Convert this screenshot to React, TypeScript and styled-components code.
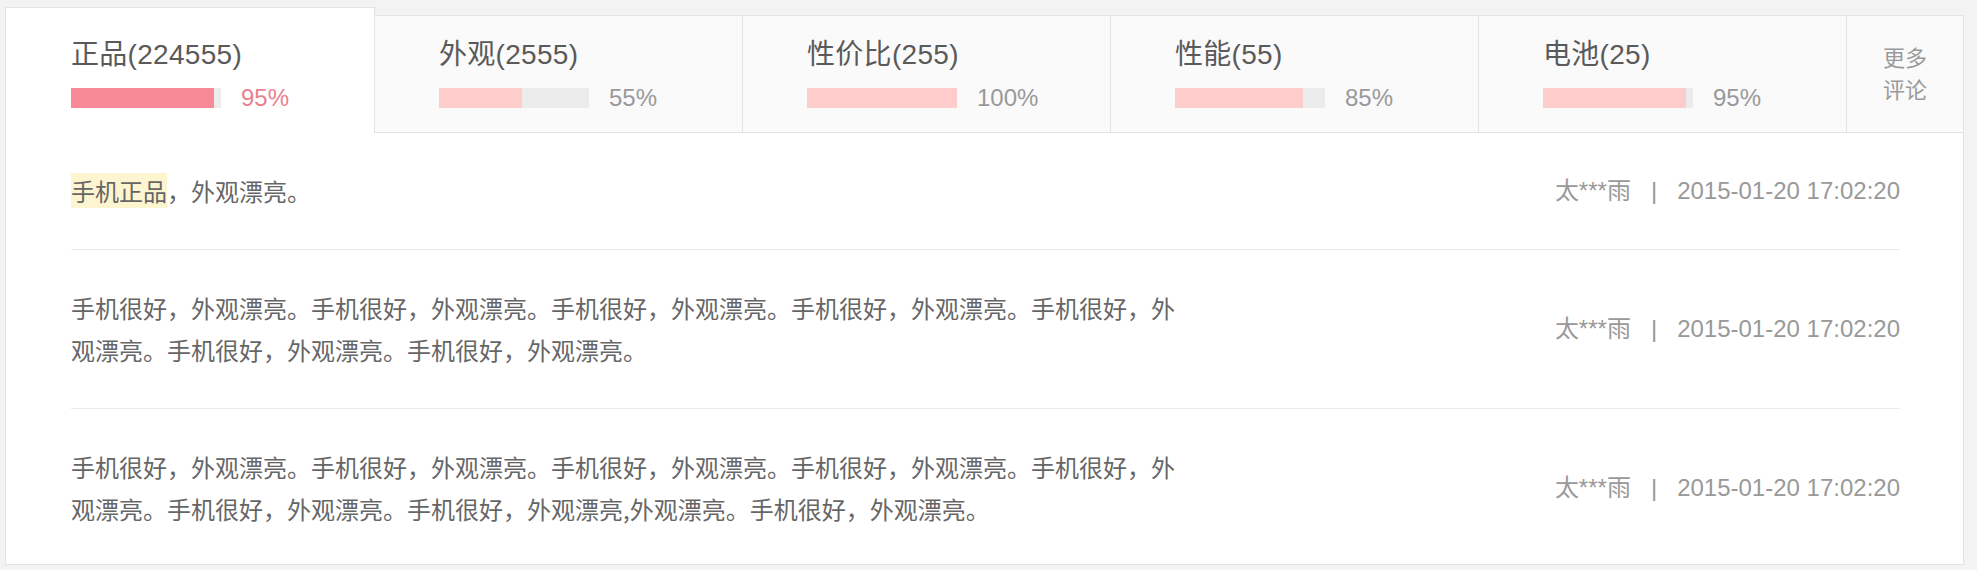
import React from "react";
import styled, { createGlobalStyle } from "styled-components";

const GlobalStyle = createGlobalStyle`
  html, body {
    margin: 0;
    padding: 0;
    background: #f3f3f3;
  }
  body {
    font-family: "Liberation Sans", "Noto Sans CJK SC", sans-serif;
  }
  * { box-sizing: border-box; }
`;

const Page = styled.div`
  padding: 15px 13px 6px 5px;
`;

const Panel = styled.div`
  background: #fff;
  border: 1px solid #e3e3e3;
`;

const TabBar = styled.div`
  display: flex;
  height: 117px;
  background: #fafafa;
  border-bottom: 1px solid #e3e3e3;
`;

const Tab = styled.div<{ $active?: boolean }>`
  position: relative;
  display: flex;
  flex-direction: column;
  flex: none;
  width: ${(p) => (p.$active ? "370px" : "368px")};
  padding-left: ${(p) => (p.$active ? "65px" : "64px")};
  padding-top: ${(p) => (p.$active ? "30px" : "22px")};
  border-right: 1px solid #e3e3e3;
  ${(p) =>
    p.$active
      ? `
    z-index: 1;
    margin: -9px 0 -1px -1px;
    background: #fff;
    border-left: 1px solid #e3e3e3;
    border-top: 1px solid #e3e3e3;
  `
      : ""}
`;

const TabTitle = styled.div`
  font-size: 28px;
  line-height: 34px;
  letter-spacing: 0.3px;
  color: #5a5a5a;
  white-space: nowrap;
`;

const ScoreRow = styled.div`
  display: flex;
  align-items: center;
  margin-top: 12px;
`;

const Track = styled.div`
  width: 150px;
  height: 20px;
  background: #ececec;
`;

const Fill = styled.div<{ $active?: boolean }>`
  height: 100%;
  background: ${(p) => (p.$active ? "#f78a96" : "#ffcccc")};
`;

const Percent = styled.span<{ $active?: boolean }>`
  margin-left: 20px;
  font-size: 24px;
  line-height: 28px;
  color: ${(p) => (p.$active ? "#ea8090" : "#999")};
`;

const MoreLink = styled.a`
  flex: 1;
  display: flex;
  align-items: center;
  justify-content: center;
  padding-bottom: 4px;
  text-align: center;
  font-family: "Noto Sans CJK SC", sans-serif;
  font-size: 22px;
  line-height: 32px;
  color: #999;
  text-decoration: none;
  cursor: pointer;
`;

const List = styled.ul`
  list-style: none;
  margin: 0;
  padding: 0 63px 0 65px;
`;

const Row = styled.li`
  display: flex;
  align-items: center;
  justify-content: space-between;
  padding: 37px 0;
  border-bottom: 1px solid #ebebeb;
  &:last-child {
    border-bottom: none;
    padding-bottom: 34px;
  }
`;

const Content = styled.p`
  margin: 0;
  width: 1110px;
  font-family: "Noto Sans CJK SC", sans-serif;
  font-size: 24px;
  line-height: 42px;
  color: #666;
`;

const Mark = styled.span`
  background: #fdf5d0;
`;

const Meta = styled.div`
  display: flex;
  align-items: center;
  font-size: 24px;
  line-height: 30px;
  color: #999;
  white-space: nowrap;
`;

const Sep = styled.span`
  margin: 0 20px;
`;

const tabs = [
  { name: "正品", count: 224555, pct: 95 },
  { name: "外观", count: 2555, pct: 55 },
  { name: "性价比", count: 255, pct: 100 },
  { name: "性能", count: 55, pct: 85 },
  { name: "电池", count: 25, pct: 95 },
];

const good = "手机很好，外观漂亮。";

const comments: { text: React.ReactNode }[] = [
  {
    text: (
      <>
        <Mark>手机正品</Mark>，外观漂亮。
      </>
    ),
  },
  { text: good.repeat(7) },
  {
    text:
      good.repeat(4) +
      "手机很好，外观漂亮。手机很好，外观漂亮。手机很好，外观漂亮,外观漂亮。手机很好，外观漂亮。",
  },
];

export default function App() {
  return (
    <>
      <GlobalStyle />
      <Page>
        <Panel>
          <TabBar>
            {tabs.map((t, i) => {
              const active = i === 0;
              return (
                <Tab key={t.name} $active={active}>
                  <TabTitle>
                    {t.name}({t.count})
                  </TabTitle>
                  <ScoreRow>
                    <Track>
                      <Fill $active={active} style={{ width: `${t.pct}%` }} />
                    </Track>
                    <Percent $active={active}>{t.pct}%</Percent>
                  </ScoreRow>
                </Tab>
              );
            })}
            <MoreLink>
              更多
              <br />
              评论
            </MoreLink>
          </TabBar>
          <List>
            {comments.map((c, i) => (
              <Row key={i}>
                <Content>{c.text}</Content>
                <Meta>
                  <span>太***雨</span>
                  <Sep>|</Sep>
                  <span>2015-01-20 17:02:20</span>
                </Meta>
              </Row>
            ))}
          </List>
        </Panel>
      </Page>
    </>
  );
}
